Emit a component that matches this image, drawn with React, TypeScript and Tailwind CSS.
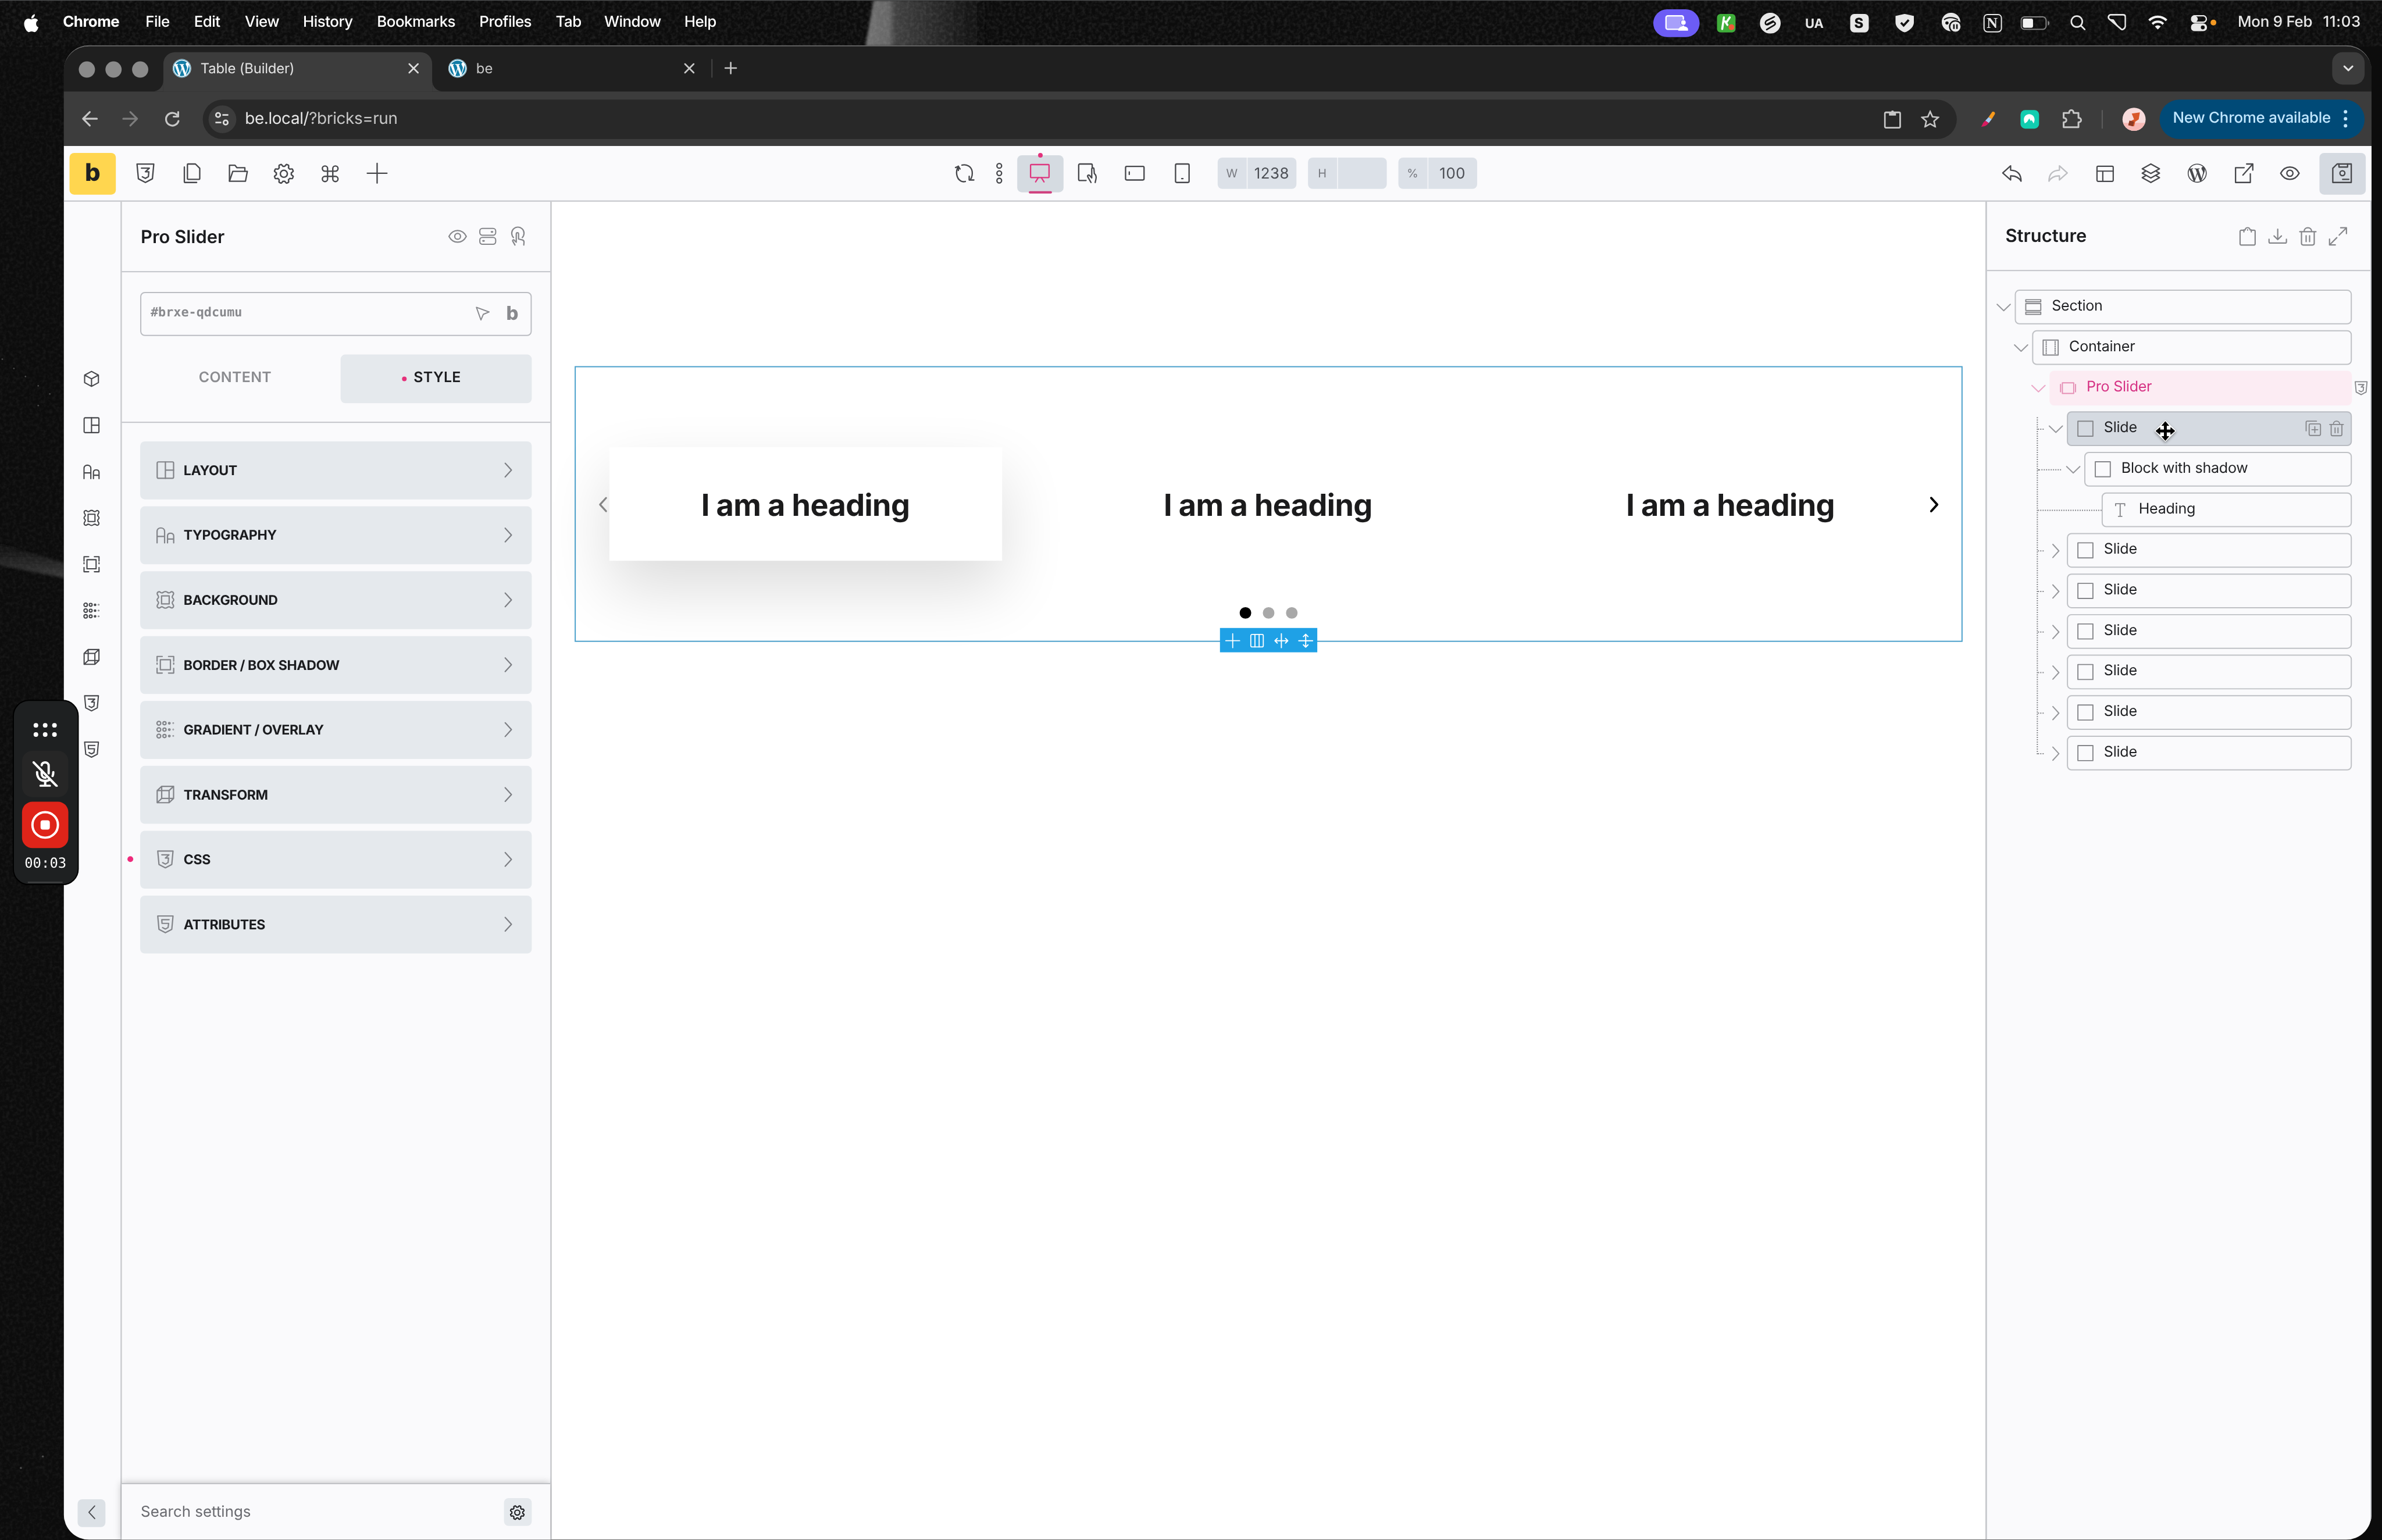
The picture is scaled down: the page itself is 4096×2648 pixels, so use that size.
import type { ReactNode } from "react";
import { FaApple, FaWordpress, FaWordpressSimple } from "react-icons/fa";
import { Command } from "lucide-react";

// Sizes are in display points; the root scales them up to device pixels.

type IconProps = { name: string; className?: string; w?: number };

// Eight-lobed cog outline around (8, 8)
function cogPath() {
  const pts: string[] = [];
  for (let i = 0; i < 160; i++) {
    const a = (i / 160) * Math.PI * 2;
    const k = Math.max(-1, Math.min(1, -Math.cos(8 * a) * 1.8));
    const r = 6.6 + 0.85 * k;
    pts.push(`${(8 + r * Math.sin(a)).toFixed(2)} ${(8 - r * Math.cos(a)).toFixed(2)}`);
  }
  return `M${pts.join("L")}Z`;
}

const COG = cogPath();

// Line icons on a 16 unit grid
const ICONS: Record<string, ReactNode> = {
  css: (
    <>
      <path d="M1.2.6h13.6l-1.1 11.9L8 15.5l-5.7-3z" />
      <path d="M4.8 3.9h6.4L8 6.8h2.8l-.4 4L8 12.2l-2.5-1.3" />
    </>
  ),
  html: (
    <>
      <path d="M1.2.6h13.6l-1.1 11.9L8 15.5l-5.7-3z" />
      <path d="M11.3 3.9H4.8l.2 3.3h5.9l-.5 3.7L8 12.2l-2.5-1.3" />
    </>
  ),
  pages: (
    <>
      <path d="M5 .5h6L14.5 4v8.5a.5.5 0 0 1-.5.5H5a.5.5 0 0 1-.5-.5V1a.5.5 0 0 1 .5-.5z" />
      <path d="M2 3v12a.5.5 0 0 0 .5.5H12" />
    </>
  ),
  folder: (
    <>
      <path d="M1 14.5V1.5h4.5L7 3.5h6.5v3" />
      <path d="M1 14.5 3.7 6.5h11.8L14 14.5z" />
    </>
  ),
  cog: (
    <>
      <path d={COG} />
      <circle cx="8" cy="8" r="2.7" />
    </>
  ),
  plus: <path d="M8 0v16M0 8h16" />,
  sync: (
    <>
      <path d="M3 2.3v3.5M.7 3.4 3 2.4l1.4 2.2" />
      <path d="M2.900 2.600C.6 6.500 1.300 12.300 5 14.300c1 .6 2.600.7 3.700.4" />
      <path d="M5.900 1.400c3.600-.9 7.600 1 8.300 5 .4 2.600-.2 5-1.400 6.800" />
      <path d="M11.800 10.500v3h3.800" />
    </>
  ),
  dots: (
    <>
      <circle cx="8" cy="2" r="1.900" />
      <circle cx="8" cy="8" r="1.900" />
      <circle cx="8" cy="14" r="1.900" />
    </>
  ),
  monitor: (
    <>
      <rect x=".5" y="1" width="15" height="10.600" rx=".6" />
      <path d="M6.800 11.600 4.600 15M9.200 11.600l2.200 3.400" />
    </>
  ),
  tabletTouch: (
    <>
      <path d="M12 3.600V1.400a.9.9 0 0 0-.9-.9H1.900a.9.9 0 0 0-.9.900V13a.9.9 0 0 0 .9.900H7" />
      <path d="M11 15.500 8.400 11c-.6-1.300.8-2 1.600-1l1.600 1.800V4.700c0-1.300 1.800-1.300 1.800 0l.3 3.600c1.200 1 1.800 2.500 1.300 4.500l-.6 2.700" />
    </>
  ),
  tabletWide: (
    <>
      <rect x=".5" y="2.500" width="15" height="11" rx="1" />
      <path d="M3.500 7v2" />
    </>
  ),
  phone: (
    <>
      <rect x="2.500" y=".5" width="11" height="15" rx="1" />
      <path d="M7.500 12.400h1" />
    </>
  ),
  undo: <path d="M7 2v3.500c5.500.2 8.500 3 8.500 9-1.700-3-4-4.500-8.500-4.300V13.500L.6 7.800z" />,
  redo: <path d="M9 2v3.500c-5.500.2-8.500 3-8.500 9 1.700-3 4-4.500 8.500-4.300V13.500l6.400-5.700z" />,
  template: (
    <>
      <rect x="1" y="1.500" width="14" height="13" rx="1" />
      <path d="M1 5.700h14M6 5.700v8.800" />
    </>
  ),
  layers: (
    <>
      <path d="M8 .5 15 4.400 8 8.200 1 4.400z" />
      <path d="M3.400 6.600 1 8l7 3.900L15 8l-2.400-1.400M3.400 10.200 1 11.600l7 3.900 7-3.900-2.400-1.400" />
    </>
  ),
  external: (
    <>
      <path d="M8.500 3.500h-7v12h12V8.500" />
      <path d="M10.500.5h5v5M15.500.5 7.500 9.500" />
    </>
  ),
  eye: (
    <>
      <path d="M.5 8C2.200 4.800 4.800 3 8 3s5.800 1.800 7.500 5c-1.700 3.200-4.300 5-7.500 5S2.200 11.200.5 8z" />
      <circle cx="8" cy="8" r="2.500" />
    </>
  ),
  save: (
    <>
      <path d="M4 .5h11.500v15H.5V4z" />
      <path d="M5.500.5V3h7V.5M8.500 13h5" />
      <circle cx="8.300" cy="8" r="2" />
    </>
  ),
  toggles: (
    <>
      <rect x=".7" y=".7" width="14.600" height="6.300" rx="2.400" />
      <rect x=".7" y="9" width="14.600" height="6.300" rx="2.400" />
      <path d="M11.500 3.850h.8M3.700 12.150h.8" strokeWidth="1.600" />
    </>
  ),
  touch: (
    <>
      <path d="M4.200 9A5.300 5.300 0 1 1 11.800 9" />
      <path d="M5.500 15.500 3.500 12c-.3-1 .9-1.400 1.400-.6l1.700 1.700V6c0-1.500 2-1.500 2 0v4.300l3.400.8c.9.300 1.300.9 1.300 1.800l-.2 2.600" />
    </>
  ),
  pointer: <path d="M1.500 1.500 15 6.500 8.800 9 6.300 15z" />,
  cube: <path d="M8 .6 14.800 4.300v7.400L8 15.400 1.200 11.700V4.300zM1.200 4.300 8 8l6.800-3.700M8 8v7.400" />,
  layout: (
    <>
      <rect x=".7" y=".7" width="14.600" height="14.600" rx="1" />
      <path d="M8 .7v14.600M8 8h7.300" />
    </>
  ),
  type: (
    <path d="M.6 15V4.800C.6 2.800 2 1.700 3.900 1.700s3.400 1.100 3.400 3.100V15M.6 9.300h6.700M9.900 15V8.800C9.900 7.300 11 6.400 12.600 6.400s2.800.9 2.800 2.400V15M9.900 11.600h5.500" />
  ),
  background: (
    <>
      <path d="M2 .8c1.200-.4 1.600 1 2.800 1S6.300.6 8 .6s2 1.200 3.200 1.200 1.600-1.400 2.800-1 1.600 1.400 1.100 2.400-1 1.200-1 2.300 1.300 1.200 1.300 2.500-1.300 1.300-1.300 2.500.5 1.200 1 2.200 0 2.200-1.100 2.500-1.600-1-2.800-1-1.500 1.200-3.200 1.200-2-1.200-3.200-1.200-1.600 1.400-2.800 1-1.600-1.400-1.100-2.500 1-1.200 1-2.300S.6 9.300.6 8s1.300-1.300 1.300-2.500-.5-1.200-1-2.300S.9 1.100 2 .8z" />
      <rect x="4.600" y="4.400" width="6.800" height="7.200" />
    </>
  ),
  border: (
    <>
      <path d="M.6 4.800V.6h4.600M10.800.6h4.600v4.200M15.400 11.200v4.200h-4.600M5.200 15.400H.6v-4.200M.6 6.500v1M15.400 6.500v1" />
      <rect x="3.500" y="3.500" width="9" height="9" />
    </>
  ),
  gradient: (
    <>
      {[2.3, 8, 13.7].map((y) => (
        <g key={y}>
          <circle cx="2.200" cy={y} r="1.700" />
          <circle cx="7.200" cy={y} r="1.400" />
          <circle cx="11.500" cy={y} r=".7" />
          <circle cx="15" cy={y} r=".2" />
        </g>
      ))}
    </>
  ),
  transform: (
    <path d="M.7 4.500 4.700.7h10.600v10.800L11.300 15.300H.7zM.7 4.500h10.600v10.800M11.300 4.500l4-3.800M4.700.7v10.800h10.600M4.700 11.500.7 15.300" />
  ),
  clipboard: (
    <>
      <path d="M4.800 2.700H2.500a1 1 0 0 0-1 1v10.800a1 1 0 0 0 1 1h11a1 1 0 0 0 1-1V3.700a1 1 0 0 0-1-1h-2.300" />
      <path d="M4.800 4.200V2.500h1C6 1.300 6.900.5 8 .5s2 .8 2.200 2h1v1.700M8 2.300v.3" />
    </>
  ),
  download: <path d="M8 1.800v9M4.800 7.600 8 10.800l3.200-3.200M.5 10.500v2.300c0 .7.4 1 1 1h13c.6 0 1-.3 1-1v-2.300" />,
  trash: (
    <>
      <path d="M1 4h14M4.700 4C4.700 2 6 .6 8 .6S11.300 2 11.300 4M2.500 4v10c0 .9.600 1.500 1.500 1.500h8c.9 0 1.500-.6 1.500-1.500V4" />
      <path d="M6.500 7.500v5M9.500 7.500v5" />
    </>
  ),
  expand: <path d="M10.300.6h5v5M15.300.6 9 6.900M5.700 15.400h-5v-5M.7 15.400 7 9.100" />,
  duplicate: (
    <>
      <path d="M.6 10.500V1.600a1 1 0 0 1 1-1h9.600" />
      <rect x="3.700" y="3.400" width="11.600" height="11.800" rx="1.300" />
      <path d="M9.500 6.300v6M6.500 9.300h6" />
    </>
  ),
  down: <path d="M1 4.500 8 11.300l7-6.800" />,
  right: <path d="M4.800 1 11.200 8 4.800 15" />,
  left: <path d="M11.200 1 4.800 8l6.400 7" />,
  section: (
    <>
      <path d="M.6.800h14.800v2.100H.6zM.6 13.100h14.800v2.100H.6z" />
      <rect x=".6" y="4.600" width="14.800" height="6.800" />
    </>
  ),
  container: (
    <>
      <rect x=".6" y=".6" width="14.800" height="14.800" />
      <path d="M3.600 2v12M12.400 2v12" strokeDasharray="1 1.200" />
    </>
  ),
  slider: (
    <>
      <rect x="2.400" y="2.800" width="11.200" height="10.400" />
      <path d="M.6 4.300v7.400M15.400 4.300v7.400" />
    </>
  ),
  block: <rect x=".6" y=".6" width="14.800" height="14.800" />,
  heading: <path d="M3.500 4V2h9v2M8 2v12.500M6.300 14.500h3.400" />,
  columns: (
    <>
      <rect x=".8" y=".8" width="14.400" height="14.400" rx="1.500" />
      <path d="M5.600.8v14.400M10.400.8v14.400" />
    </>
  ),
  spreadX: <path d="M8 0v16M.8 8h14.400M3.300 5.300.6 8l2.700 2.700M12.700 5.300 15.400 8l-2.700 2.700" />,
  spreadY: <path d="M0 8h16M8 .8v14.400M5.300 3.300 8 .6l2.700 2.700M5.300 12.700 8 15.400l2.700-2.700" />,
  arrowLeft: <path d="M14.500 8H2M8 1.800 1.800 8 8 14.200" />,
  arrowRight: <path d="M1.500 8H14M8 1.800 14.200 8 8 14.200" />,
  reload: <path d="M13.700 5A6.500 6.500 0 1 0 14.300 10M14 .8V5.500H9.300" />,
  close: <path d="m3 3 10 10M13 3 3 13" />,
};

function Icon({ name, className = "size-4", w = 1.1 }: IconProps) {
  return (
    <svg
      viewBox="0 0 16 16"
      fill="none"
      stroke="currentColor"
      strokeWidth={w}
      strokeLinecap="round"
      strokeLinejoin="round"
      className={`shrink-0 overflow-visible ${className}`}
    >
      {ICONS[name]}
    </svg>
  );
}

function Wallpaper() {
  return (
    <svg className="absolute inset-0 h-full w-full" viewBox="0 0 2056 1329">
      <defs>
        <filter id="grain" x="0" y="0" width="100%" height="100%">
          <feTurbulence type="fractalNoise" baseFrequency="0.35" numOctaves="2" seed="4" />
          <feColorMatrix values="0 0 0 0 1  0 0 0 0 1  0 0 0 0 1  0.35 0 0 0 -0.13" />
        </filter>
        <filter id="soft" x="-20%" y="-50%" width="140%" height="200%">
          <feGaussianBlur stdDeviation="1.2" />
        </filter>
        <linearGradient id="beam">
          <stop offset="0" stopColor="#727272" />
          <stop offset="0.2" stopColor="#666" />
          <stop offset="0.25" stopColor="#414141" />
          <stop offset="0.65" stopColor="#262626" />
          <stop offset="1" stopColor="#0d0d0d" />
        </linearGradient>
        <linearGradient id="streak" x1="0" y1="0" x2="0" y2="1">
          <stop offset="0" stopColor="#0d0d0d" />
          <stop offset="1" stopColor="#3a3a3a" />
        </linearGradient>
      </defs>
      <rect width="2056" height="1329" fill="#0c0c0c" />
      <path d="M754 0 747 40H850V0z" fill="url(#beam)" filter="url(#soft)" />
      <path d="M-4 468 56 486V499L-4 487z" fill="url(#streak)" filter="url(#soft)" />
      <g fill="#4a4a4a">
        <circle cx="12" cy="318" r="0.700" />
        <circle cx="22" cy="325" r="0.700" />
        <circle cx="33" cy="333" r="0.700" />
        <circle cx="43" cy="340" r="0.700" />
        <circle cx="33" cy="350" r="0.700" />
        <circle cx="2" cy="310" r="0.700" />
        <circle cx="37" cy="1257" r="0.900" />
        <circle cx="18" cy="1267" r="0.900" />
      </g>
      <rect width="2056" height="40" filter="url(#grain)" opacity="0.5" />
      <rect y="40" width="60" height="1289" filter="url(#grain)" opacity="0.3" />
      <rect width="2056" height="0.600" fill="#4d4f50" />
    </svg>
  );
}

const MENUS = [
  { label: "Chrome", cls: "w-[71.3px] font-bold" },
  { label: "File", cls: "w-[41.9px]" },
  { label: "Edit", cls: "w-[43.9px]" },
  { label: "View", cls: "w-[50.2px]" },
  { label: "History", cls: "w-[63.9px]" },
  { label: "Bookmarks", cls: "w-[88.3px]" },
  { label: "Profiles", cls: "w-[65.9px]" },
  { label: "Tab", cls: "w-[41.9px]" },
  { label: "Window", cls: "w-[69.2px]" },
  { label: "Help", cls: "" },
];

function MenuBar() {
  return (
    <div className="relative flex h-[39px] items-center text-[13px] font-medium text-white">
      <FaApple className="ml-[19px] mr-[19.300px] size-[16px] scale-x-[1.050] scale-y-110" />
      {MENUS.map((m) => (
        <span key={m.label} className={`mt-px whitespace-nowrap tracking-[-0.02em] ${m.cls}`}>
          {m.label}
        </span>
      ))}
      <div className="ml-auto flex w-[629px] shrink-0 items-center text-[#e8e8e8]">
        <span className="flex h-6 w-10 items-center justify-center rounded-full bg-[#6c5cf5]">
          <svg viewBox="0 0 20 14" className="h-[14px] w-5">
            <rect x="1" y="0.700" width="15" height="11.600" rx="1.500" fill="#a79ffa" stroke="#fff" strokeWidth="1.200" />
            <circle cx="16" cy="6.500" r="2.300" fill="#fff" stroke="#6c5cf5" strokeWidth="0.600" />
            <path d="M11.500 13.500c0-5 9-5 9 0z" fill="#fff" />
          </svg>
        </span>
        <span className="relative ml-[15px] flex size-4 items-center justify-center rounded-[3px] bg-[#3fae3a]">
          <svg viewBox="0 0 16 16" className="size-4" fill="none" stroke="#fff" strokeWidth="1.800" strokeLinecap="round">
            <path d="M6 3 4.500 13M11 3 8 7.500M7 6.500l2 3" />
          </svg>
          <span className="absolute bottom-[1.500px] right-[1.500px] size-[5px] rounded-full bg-[#ef5a3a]" />
        </span>
        <svg viewBox="0 0 18 18" className="ml-[21px] size-[18px]">
          <circle cx="9" cy="9" r="9" fill="#e8e8e8" />
          <path
            d="M12.500 3.500 6 6.800c-2 1.200-1.500 4 1 3.400l3.800-2c2-.9 3.400 1.300 1.600 2.500l-6.500 3.800M6.500 9.800l5-2.600"
            fill="none"
            stroke="#111"
            strokeWidth="1.300"
            strokeLinecap="round"
          />
        </svg>
        <span className="ml-[21px] mt-px w-[17px] text-[11px] font-bold">UA</span>
        <span className="ml-[21.500px] flex size-4 items-center justify-center rounded-[3.500px] bg-[#e8e8e8] text-[12px] font-extrabold text-[#111]">
          S
        </span>
        <svg viewBox="0 0 16 16" className="ml-[23px] size-4">
          <path d="M8 0 16 1.800V7c0 4-3.500 7.500-8 9-4.500-1.500-8-5-8-9V1.800z" fill="#e8e8e8" />
          <path d="m4.800 7.600 2.300 2.400 4.400-4.800" fill="none" stroke="#111" strokeWidth="1.800" />
        </svg>
        <svg viewBox="0 0 17 17" className="ml-6 size-[17px]">
          <circle cx="8" cy="8" r="8" fill="#e8e8e8" />
          <circle cx="4.500" cy="8.800" r="1.400" fill="#111" />
          <path d="M2 6c3-2.500 8-2.500 12 0" stroke="#111" fill="none" />
          <circle cx="11.800" cy="12" r="5" fill="#e8e8e8" stroke="#111" strokeWidth="1.200" />
          <path d="M10.500 10v4M13.100 10v4" stroke="#111" strokeWidth="1.300" />
        </svg>
        <span className="ml-[19px] flex size-4 items-center justify-center rounded-[3.500px] border-[1.300px] border-[#e8e8e8] font-['Liberation_Serif',serif] text-[13px] font-bold">
          N
        </span>
        <svg viewBox="0 0 26 12" className="ml-4 h-3 w-[25.500px]">
          <rect x="0.500" y="0.500" width="22" height="11" rx="3" fill="none" stroke="#838383" />
          <rect x="2" y="2" width="9" height="8" rx="1.500" fill="#f2f2f2" />
          <path d="M24 4v4c2-.4 2-3.600 0-4z" fill="#838383" />
        </svg>
        <svg viewBox="0 0 14 14" className="ml-[17.500px] size-[13.500px]" fill="none" stroke="#e8e8e8" strokeWidth="1.400">
          <circle cx="5.800" cy="5.800" r="4.900" />
          <path d="M9.400 9.400 13.500 13.500" strokeLinecap="round" />
        </svg>
        <svg viewBox="0 0 17 15" className="ml-[18.500px] h-[14.500px] w-[16.500px]">
          <path d="M3 .8h11c1.200 0 2 .8 2 2v8c0 1.200-.6 2-1.800 2.800-.8.500-1.700.4-2.300-.3L1.500 4.500C.3 3.200 1 .8 3 .8z" fill="none" stroke="#e8e8e8" strokeWidth="1.400" />
          <path d="M1 4.500 5.500 4.800 11.500 13.500z" fill="#e8e8e8" />
        </svg>
        <svg viewBox="0 0 17 13" className="ml-[19px] h-[13px] w-[17px]" fill="none" stroke="#f2f2f2" strokeWidth="2">
          <path d="M1 4.600c4.300-4.200 10.700-4.200 15 0M3.800 7.700c2.700-2.600 6.700-2.600 9.400 0" />
          <path d="M8.500 12.500 6 9.900c1.500-1.400 3.500-1.400 5 0z" fill="#f2f2f2" stroke="none" />
        </svg>
        <svg viewBox="0 0 14 14" className="ml-[19.500px] size-[14px]" fill="none" stroke="#e8e8e8" strokeWidth="1.200">
          <rect x="0.600" y="0.600" width="12.800" height="5.600" rx="2.800" />
          <circle cx="3.500" cy="3.400" r="1.900" fill="#e8e8e8" />
          <rect x="0.600" y="7.800" width="12.800" height="5.600" rx="2.800" fill="#e8e8e8" />
          <circle cx="10.300" cy="10.600" r="1.700" fill="#111" stroke="none" />
        </svg>
        <span className="ml-[3.500px] size-[5px] rounded-full bg-[#f59a23]" />
        <span className="ml-[18.500px] mt-px w-[73.500px] whitespace-nowrap tracking-[-0.01em]">Mon 9 Feb</span>
        <span className="mt-px whitespace-nowrap tracking-[0.025em]">11:03</span>
      </div>
    </div>
  );
}

function Favicon() {
  return (
    <span className="flex size-4 items-center justify-center rounded-full bg-white">
      <FaWordpress className="size-4 text-[#117ca6]" />
    </span>
  );
}

function TabStrip() {
  return (
    <div className="flex h-[39px] items-end bg-[#1f1f1f]">
      <div className="mb-[12.500px] ml-[13px] flex gap-[9px]">
        <span className="size-[14px] rounded-full bg-[#8b8b8b]" />
        <span className="size-[14px] rounded-full bg-[#8b8b8b]" />
        <span className="size-[14px] rounded-full bg-[#8b8b8b]" />
      </div>
      <div className="relative ml-[13px] flex h-[34px] w-[232px] items-center rounded-t-[10px] bg-[#3c3c3c] px-2 pb-[6px]">
        {/* flared feet of the active tab */}
        <svg viewBox="0 0 10 10" className="absolute -left-[10px] bottom-0 size-[10px] text-[#3c3c3c]">
          <path d="M10 0v10H0c6 0 10-4 10-10z" fill="currentColor" />
        </svg>
        <svg viewBox="0 0 10 10" className="absolute -right-[10px] bottom-0 size-[10px] text-[#3c3c3c]">
          <path d="M0 0v10h10C4 10 0 6 0 0z" fill="currentColor" />
        </svg>
        <Favicon />
        <span className="ml-[8px] text-[12px] tracking-[-0.008em] text-[#e3e3e3]">Table (Builder)</span>
        <Icon name="close" w={1.8} className="ml-auto mr-[2px] size-[12px] text-[#dcdcdc]" />
      </div>
      <div className="flex h-[34px] w-[241px] items-center pb-[6px] pl-[14px]">
        <Favicon />
        <span className="ml-[8px] text-[12px] text-[#c7c7c7]">be</span>
        <Icon name="close" w={1.8} className="ml-auto mr-[13px] size-[12px] text-[#c7c7c7]" />
      </div>
      <span className="mb-[12px] h-4 w-px bg-[#454545]" />
      <Icon name="plus" w={2.2} className="mb-[15.500px] ml-[11px] size-[9.500px] text-[#c7c7c7]" />
      <div className="mb-[6px] ml-auto mr-[6px] flex size-7 items-center justify-center rounded-[9px] bg-[#3c3c3c]">
        <Icon name="down" w={3} className="size-[8px] text-[#e3e3e3]" />
      </div>
    </div>
  );
}

function AddressBar() {
  return (
    <div className="flex h-[47px] items-center bg-[#3c3c3c]">
      <Icon name="arrowLeft" w={1.7} className="ml-[14.500px] size-[15px] text-[#c7c7c7]" />
      <Icon name="arrowRight" w={1.7} className="ml-[20.500px] size-[15px] text-[#7d7d7d]" />
      <Icon name="reload" w={1.9} className="ml-[22px] size-[13.500px] text-[#c7c7c7]" />
      <div className="ml-[19.500px] flex h-[34px] w-[1514px] items-center rounded-full bg-[#282828] pl-[4.500px] pr-[15px]">
        <span className="flex size-6 items-center justify-center rounded-full bg-[#3c3c3c]">
          <svg viewBox="0 0 14 14" className="size-[13px]" fill="none" stroke="#dcdcdc" strokeWidth="1.500">
            <circle cx="3.500" cy="3.500" r="2" />
            <circle cx="10.500" cy="10.500" r="2" />
            <path d="M7.500 3.500H13M1 10.500h5.500" />
          </svg>
        </span>
        <span className="ml-[8px] text-[14px] tracking-[-0.015em] text-[#e6e6e6]">
          be.local/<span className="text-[#c7c7c7]">?bricks=run</span>
        </span>
        <svg viewBox="0 0 15 16" className="ml-auto h-4 w-[15px]" fill="none" stroke="#c7c7c7" strokeWidth="1.400">
          <rect x="0.900" y="2" width="13.200" height="13.200" rx="1" />
          <path d="M4.500 1.500h6v3.300h-6z" fill="#c7c7c7" stroke="none" />
          <circle cx="7.500" cy="1.600" r="1.200" fill="#c7c7c7" stroke="none" />
        </svg>
        <svg viewBox="0 0 16 15" className="ml-[17px] h-[15px] w-4" fill="none" stroke="#c7c7c7" strokeWidth="1.300">
          <path d="m8 1.300 2 4.500 5 .5-3.700 3.300 1.100 4.800L8 11.900l-4.400 2.500 1.100-4.800L1 6.300l5-.5z" />
        </svg>
      </div>
      <svg viewBox="0 0 14 14" className="ml-[19.500px] size-[14px]">
        <path d="M10.500.6c1-.6 2.800 0 2.400 1.800l-2.700 4.400-2.800-1.700z" fill="#f79a1c" />
        <path d="m7.400 5.100 2.800 1.700-2.600 3.400-3-2z" fill="#a9cdf4" />
        <path d="m4.600 8.200 3 2C5.500 13 3 13.300 1 13.400c1-1 1.200-3.400 3.600-5.200z" fill="#d81b60" />
      </svg>
      <span className="ml-[21px] flex size-4 items-center justify-center rounded-[4px] bg-[#12cdb0]">
        <svg viewBox="0 0 12 10" className="h-[9px] w-[11px]">
          <path d="M1.800 9.500C-.8 4 2.500.5 6 .5s6.800 3.500 4.200 9L8.300 6.300l-.8.9L6 4.800 4 8z" fill="#fff" />
        </svg>
      </span>
      <svg viewBox="0 0 17 17" className="ml-[20px] size-[17px]" fill="none" stroke="#c7c7c7" strokeWidth="1.500">
        <path d="M1.200 3.500H6c-.3-3.300 4-3.300 3.700 0H14v4.300c3-.3 3 4 0 3.700v4.300H1.200v-4.300c3.200 0 3.200-3.700 0-3.700z" strokeLinejoin="round" />
      </svg>
      <span className="ml-[17px] h-4 w-px bg-[#5d5d5d]" />
      <span className="relative ml-[17px] size-5 overflow-hidden rounded-full bg-[#f8dcdc]">
        <svg viewBox="0 0 20 20" className="size-5">
          <path d="M0 13h20v7H0z" fill="#f6b9b6" />
          <path d="m8 5 7-1-1 6-3 2-1 4-5-1 1-3 4-2z" fill="#d9582a" />
          <path d="m6 11 4 1-1 4-4-1z" fill="#8c3a24" />
        </svg>
      </span>
      <div className="ml-[12.500px] flex h-[34px] w-[176.500px] items-center rounded-full bg-[#004a77] pl-[11.500px] text-[#c2e7ff]">
        <span className="whitespace-nowrap text-[13px] font-medium tracking-[-0.01em]">New Chrome available</span>
        <span className="ml-auto mr-[14.500px] flex flex-col gap-[3px]">
          <span className="size-[3px] rounded-full bg-current" />
          <span className="size-[3px] rounded-full bg-current" />
          <span className="size-[3px] rounded-full bg-current" />
        </span>
      </div>
    </div>
  );
}

function ToolButton({ children, className = "" }: { children: ReactNode; className?: string }) {
  return <div className={`flex h-9 w-10 items-center justify-center ${className}`}>{children}</div>;
}

function SizeField({ label, value }: { label: string; value: string }) {
  return (
    <div className="mr-[10px] flex h-[27px] w-[68px] items-center rounded-[4px] bg-[#dce1e8]">
      <span className="flex h-full w-[26.500px] items-center justify-center border-r border-[#f0f2f5] pt-px text-[10px] text-[#77797f]">
        {label}
      </span>
      <span className="mt-[1.500px] flex-1 text-center text-[13px] tracking-[0.02em] text-[#4c4f55]">{value}</span>
    </div>
  );
}

function BuilderToolbar() {
  return (
    <div className="flex h-12 items-center border-b border-[#c3c5ca] bg-[#fafafc] text-[#47484c]">
      <div className="flex w-[768.500px] shrink-0 items-center pl-[5px]">
        <ToolButton className="mr-[5px] rounded-[4px] bg-[#ffd64f] text-[21px] font-extrabold text-[#1f2023]">b</ToolButton>
        <ToolButton>
          <Icon name="css" className="size-[17px]" />
        </ToolButton>
        <ToolButton>
          <Icon name="pages" className="size-[17px]" />
        </ToolButton>
        <ToolButton>
          <Icon name="folder" className="size-[17px]" />
        </ToolButton>
        <ToolButton>
          <Icon name="cog" className="size-[18px]" />
        </ToolButton>
        <ToolButton>
          <Command strokeWidth={1.6} className="size-[18px]" />
        </ToolButton>
        <ToolButton>
          <Icon name="plus" className="size-[17px]" />
        </ToolButton>
      </div>
      <div className="flex shrink-0 items-center">
        <Icon name="sync" className="size-[17px]" />
        <Icon name="dots" className="ml-[13px] size-[17px]" />
        <div className="relative ml-[7px] flex h-8 w-10 items-center justify-center rounded-[4px] bg-[#d5dbe1] text-[#dd377f]">
          <Icon name="monitor" className="size-[17px]" />
          <span className="absolute -top-[2px] size-1 rounded-full bg-[#e2327c]" />
          <span className="absolute -bottom-px h-[2px] w-5 rounded-[1px] bg-[#cf3f7d]" />
        </div>
        <Icon name="tabletTouch" className="ml-[12px] size-[17px]" />
        <Icon name="tabletWide" className="ml-[24px] size-[17px]" />
        <Icon name="phone" className="ml-[24px] mr-[22px] size-[17px]" />
        <SizeField label="W" value="1238" />
        <SizeField label="H" value="" />
        <SizeField label="%" value="100" />
      </div>
      <div className="flex flex-1 items-center justify-end pr-[5px]">
        <ToolButton>
          <Icon name="undo" className="size-[17px]" />
        </ToolButton>
        <ToolButton className="text-[#bdbec2]">
          <Icon name="redo" className="size-[17px]" />
        </ToolButton>
        <ToolButton>
          <Icon name="template" className="size-[16px]" />
        </ToolButton>
        <ToolButton>
          <Icon name="layers" className="size-[17px]" />
        </ToolButton>
        <ToolButton>
          <FaWordpressSimple className="size-[17px]" />
        </ToolButton>
        <ToolButton>
          <Icon name="external" className="size-[17px]" />
        </ToolButton>
        <ToolButton>
          <Icon name="eye" className="size-[17px]" />
        </ToolButton>
        <ToolButton className="ml-[5px] rounded-[4px] bg-[#d5dae1]">
          <Icon name="save" className="size-[17px]" />
        </ToolButton>
      </div>
    </div>
  );
}

const RAIL = ["cube", "layout", "type", "background", "border", "gradient", "transform", "css", "html"];

function Rail() {
  return (
    <div className="flex w-[49.500px] shrink-0 flex-col items-center border-r border-[#c9cbcf] bg-[#fafafc] pr-[0.500px] pt-[133px] text-[#47484c]">
      {RAIL.map((name) => (
        <div key={name} className="flex h-10 items-center">
          <Icon name={name} w={1.2} className="size-[14px]" />
        </div>
      ))}
      <div className="mb-[11px] mt-auto flex size-6 items-center justify-center rounded-[4px] bg-[#dce1e6]">
        <Icon name="left" w={1.2} className="size-[12.500px]" />
      </div>
    </div>
  );
}

const GROUPS = [
  { icon: "layout", label: "LAYOUT" },
  { icon: "type", label: "TYPOGRAPHY" },
  { icon: "background", label: "BACKGROUND" },
  { icon: "border", label: "BORDER / BOX SHADOW" },
  { icon: "gradient", label: "GRADIENT / OVERLAY" },
  { icon: "transform", label: "TRANSFORM" },
  { icon: "css", label: "CSS", changed: true },
  { icon: "html", label: "ATTRIBUTES" },
];

function SettingsPanel() {
  return (
    <div className="flex w-[371px] shrink-0 flex-col border-r border-[#c3c5ca] bg-[#fafafc]">
      <div className="flex h-[61px] items-center border-b border-[#c3c5ca] pl-[17px] pr-[20px]">
        <h1 className="mt-[1.500px] text-[15.500px] font-semibold text-[#1b1c1f]">Pro Slider</h1>
        <div className="ml-auto flex gap-[10px] text-[#85868a]">
          <Icon name="eye" />
          <Icon name="toggles" className="size-4 px-[0.500px]" />
          <Icon name="touch" />
        </div>
      </div>
      <div className="flex flex-col gap-4 border-b border-[#c3c5ca] px-4 pb-4 pt-[16.500px]">
        <div className="flex h-[38px] items-center rounded-[4px] border border-[#bbbdc2] pl-[8.500px] pr-[10px] text-[#88898d]">
          <span className="font-['DejaVu_Sans_Mono',monospace] text-[10.950px] font-bold">#brxe-qdcumu</span>
          <Icon name="pointer" w={1.2} className="ml-auto size-[13px]" />
          <span className="ml-[14px] text-[16.500px] font-extrabold leading-none">b</span>
        </div>
        <div className="flex h-[42px] text-[12.500px] font-semibold tracking-[0.012em]">
          <div className="flex w-[165px] items-center justify-center pt-[1.500px] text-[#8b8c90]">CONTENT</div>
          <div className="ml-auto flex w-[165px] items-center justify-center rounded-[4px] bg-[#e5e9ed] pr-[7px] pt-px text-[#1b1c1f]">
            <span className="mr-[6px] size-1 rounded-full bg-[#e5307a]" />
            STYLE
          </div>
        </div>
      </div>
      <div className="flex flex-1 flex-col gap-[6px] p-4">
        {GROUPS.map((g) => (
          <div key={g.label} className="relative flex h-[50px] items-center rounded-[4px] bg-[#e5e9ed] pl-[14.500px] pr-[13px]">
            {g.changed && <span className="absolute -left-[11px] size-[5px] rounded-full bg-[#ee2a7b]" />}
            <Icon name={g.icon} w={1.15} className="size-[15.500px] text-[#828489]" />
            <span className="ml-[8px] mt-[1.500px] text-[11.600px] font-bold tracking-[-0.018em] text-[#1b1c1f]">{g.label}</span>
            <Icon name="right" w={1.3} className="ml-auto size-[13.500px] text-[#7c7e83]" />
          </div>
        ))}
      </div>
      <div className="flex h-[49px] items-center border-t border-[#bfc1c5] bg-[#fafafc] pl-[17px] pr-4 shadow-[0_0_6px_rgba(0,0,0,0.25)]">
        <span className="mt-[2px] text-[13px] text-[#696a6f]">Search settings</span>
        <div className="ml-auto mt-px flex size-6 items-center justify-center rounded-[4px] bg-[#e5e9ed] text-[#1b1c1f]">
          <Icon name="cog" w={1.3} className="size-[13px]" />
        </div>
      </div>
    </div>
  );
}

function Canvas() {
  return (
    <div className="relative flex-1 bg-white pl-[20.500px] pt-[142px]">
      <div className="relative flex h-[237.500px] w-[1198px] items-center border border-[#4aa0cb]">
        <div className="ml-[28.500px] flex gap-[59.700px]">
          {[0, 1, 2].map((i) => (
            <div
              key={i}
              className={`flex h-[98px] w-[339.500px] items-center justify-center bg-white ${
                i === 0 ? "shadow-[0_24px_55px_rgba(0,0,0,0.14)]" : ""
              }`}
            >
              <h2 className="mt-[3px] whitespace-nowrap text-[26.200px] font-bold tracking-[-0.011em] text-[#1b1b1c]">
                I am a heading
              </h2>
            </div>
          ))}
        </div>
        <Icon name="left" w={2} className="absolute left-[17px] top-[111.500px] size-[13px] text-[#858585]" />
        <Icon name="right" w={2.4} className="absolute right-[17px] top-[111.500px] size-[13px] text-black" />
        <div className="absolute inset-x-0 top-[206.500px] flex justify-center gap-[10px]">
          <span className="size-[10px] rounded-full bg-black" />
          <span className="size-[10px] rounded-full bg-[#a8a8a8]" />
          <span className="size-[10px] rounded-full bg-[#a8a8a8]" />
        </div>
        <div className="absolute -bottom-[10.500px] left-1/2 flex h-[21px] w-[84px] -translate-x-1/2 items-center justify-around bg-[#1fa1e6] text-white">
          <Icon name="plus" w={1.2} className="size-3" />
          <Icon name="columns" w={1.2} className="size-3" />
          <Icon name="spreadX" w={1.3} className="size-3" />
          <Icon name="spreadY" w={1.3} className="size-3" />
        </div>
      </div>
    </div>
  );
}

type Node = {
  label: string;
  icon: string;
  indent: string;
  open?: boolean;
  leaf?: boolean;
  line?: boolean;
  state?: "active" | "hover";
};

const CLOSED: Node = { label: "Slide", icon: "block", indent: "w-[49px]", line: true };

const NODES: Node[] = [
  { label: "Section", icon: "section", indent: "w-[4px]", open: true },
  { label: "Container", icon: "container", indent: "w-[19px]", open: true },
  { label: "Pro Slider", icon: "slider", indent: "w-[34px]", open: true, state: "active" },
  { label: "Slide", icon: "block", indent: "w-[49px]", open: true, line: true, state: "hover" },
  { label: "Block with shadow", icon: "block", indent: "w-[64px]", open: true, line: true },
  { label: "Heading", icon: "heading", indent: "w-[99px]", leaf: true, line: true },
  CLOSED,
  CLOSED,
  CLOSED,
  CLOSED,
  CLOSED,
  CLOSED,
];

function TreeRow({ node }: { node: Node }) {
  const active = node.state === "active";
  const hover = node.state === "hover";
  const box = active
    ? "border-[#fcecf3] bg-[#fcecf3] text-[#d63384]"
    : hover
      ? "border-[#b9bcc2] bg-[#d5dae1] text-[#1f2023]"
      : "border-[#bfc1c5] text-[#1f2023]";

  return (
    <div className="flex h-[30px] items-center">
      <div className={`shrink-0 ${node.indent}`}>
        {node.line && <div className="ml-[43.500px] mt-px border-t border-dotted border-[#85868a]" />}
      </div>
      {!node.leaf && (
        <div className={`flex w-5 shrink-0 justify-center ${active ? "text-[#eba6c6]" : "text-[#97989c]"}`}>
          <Icon name={node.open ? "down" : "right"} w={1.25} className="size-[13px]" />
        </div>
      )}
      <div className={`flex h-[30px] flex-1 items-center rounded-[4px] border pl-[8px] pr-[6px] ${box}`}>
        <Icon name={node.icon} w={1.1} className={`size-[14px] ${active ? "text-[#e58fb5]" : "text-[#85868a]"}`} />
        <span className="ml-[9px] mt-[1.500px] whitespace-nowrap text-[12.600px] tracking-[-0.01em]">{node.label}</span>
        {hover && (
          <div className="ml-auto flex gap-[6.500px] text-[#85868a]">
            <Icon name="duplicate" w={1.1} className="size-[13.500px]" />
            <Icon name="trash" w={1.1} className="size-[13.500px]" />
          </div>
        )}
      </div>
      <div className="flex w-[15.500px] shrink-0 justify-center">
        {active && <Icon name="css" w={1.2} className="size-[12px] text-[#85868a]" />}
      </div>
    </div>
  );
}

function StructurePanel() {
  return (
    <div className="relative flex w-[332.500px] shrink-0 flex-col border-x border-[#c3c5ca] bg-[#fafafc]">
      <div className="flex h-[60px] items-center border-b border-[#c3c5ca] pl-[16px] pr-[20px]">
        <h2 className="mt-px text-[15.500px] font-semibold text-[#1b1c1f]">Structure</h2>
        <div className="ml-auto flex gap-[10px] text-[#85868a]">
          <Icon name="clipboard" />
          <Icon name="download" />
          <Icon name="trash" />
          <Icon name="expand" />
        </div>
      </div>
      <div className="relative flex flex-col gap-[5px] pt-4">
        {NODES.map((node, i) => (
          <TreeRow key={i} node={node} />
        ))}
        <div className="absolute bottom-[14.500px] left-[43px] top-[126px] border-l border-dotted border-[#85868a]" />
      </div>
      <svg viewBox="0 0 20 20" className="absolute left-[143.500px] top-[188px] size-5 drop-shadow-[0_1px_1px_rgba(0,0,0,0.4)]">
        <path d="M10 .6 19.400 10 10 19.400.6 10z" fill="#fff" />
        <path
          d="M10 1.800 13 5.300h-2v3.700h3.700V7L18.200 10l-3.500 3v-2H11v3.700h2L10 18.200l-3-3.500h2V11H5.300v2L1.800 10l3.500-3v2H9V5.300H7z"
          fill="#000"
          stroke="#000"
          strokeWidth="0.500"
        />
      </svg>
    </div>
  );
}

function Recorder() {
  return (
    <div className="absolute left-[11px] top-[604px] flex h-[160px] w-[56.500px] flex-col items-center rounded-[14px] border border-black bg-[#1e2021] pt-[18.500px]">
      <div className="grid grid-cols-3 gap-1">
        {[0, 1, 2, 3, 4, 5].map((i) => (
          <span key={i} className="size-1 rounded-full bg-white" />
        ))}
      </div>
      <div className="mt-[12px] flex size-10 items-center justify-center rounded-[9px] bg-[#262626]">
        <svg viewBox="0 0 22 22" className="size-[22px]" fill="none" stroke="#fff" strokeWidth="2" strokeLinecap="round">
          <path d="M1 1 21 21.500M8 3.500C8 .2 14 .2 14 4v6.500M8 8v3c0 2 1.500 3.300 3.200 3.300M4 9.500c0 5 2.800 7.500 7 7.500 1.500 0 3-.4 4-1.200M18 9.500c0 1.200-.2 2.300-.6 3.200M11 17v4M7 21.200h8" />
        </svg>
      </div>
      <div className="mt-1 flex size-10 items-center justify-center rounded-[9px] bg-[#df2419]">
        <span className="flex size-6 items-center justify-center rounded-full border-2 border-white">
          <span className="size-2 rounded-[2px] bg-white" />
        </span>
      </div>
      <span className="mt-[4px] font-['DejaVu_Sans_Mono',monospace] text-[12px] leading-[18px] text-white">00:03</span>
      <span className="absolute bottom-px h-px w-[30px] bg-[#454647]" />
    </div>
  );
}

export default function App() {
  return (
    <div className="h-[2648px] w-[4096px] overflow-hidden bg-[#0c0c0c]">
      <div className="relative h-[1329px] w-[2056px] origin-top-left scale-[1.99222] overflow-hidden font-['Inter',sans-serif] antialiased [text-rendering:geometricPrecision]">
        <Wallpaper />
        <MenuBar />
        <div className="relative ml-[55px] flex h-[1289.500px] w-[1991.500px] flex-col overflow-hidden rounded-[22px] border-t border-[#6a6a6a] bg-[#1f1f1f]">
          <TabStrip />
          <AddressBar />
          <BuilderToolbar />
          <div className="flex min-h-0 flex-1">
            <Rail />
            <SettingsPanel />
            <Canvas />
            <StructurePanel />
          </div>
        </div>
        <Recorder />
      </div>
    </div>
  );
}
